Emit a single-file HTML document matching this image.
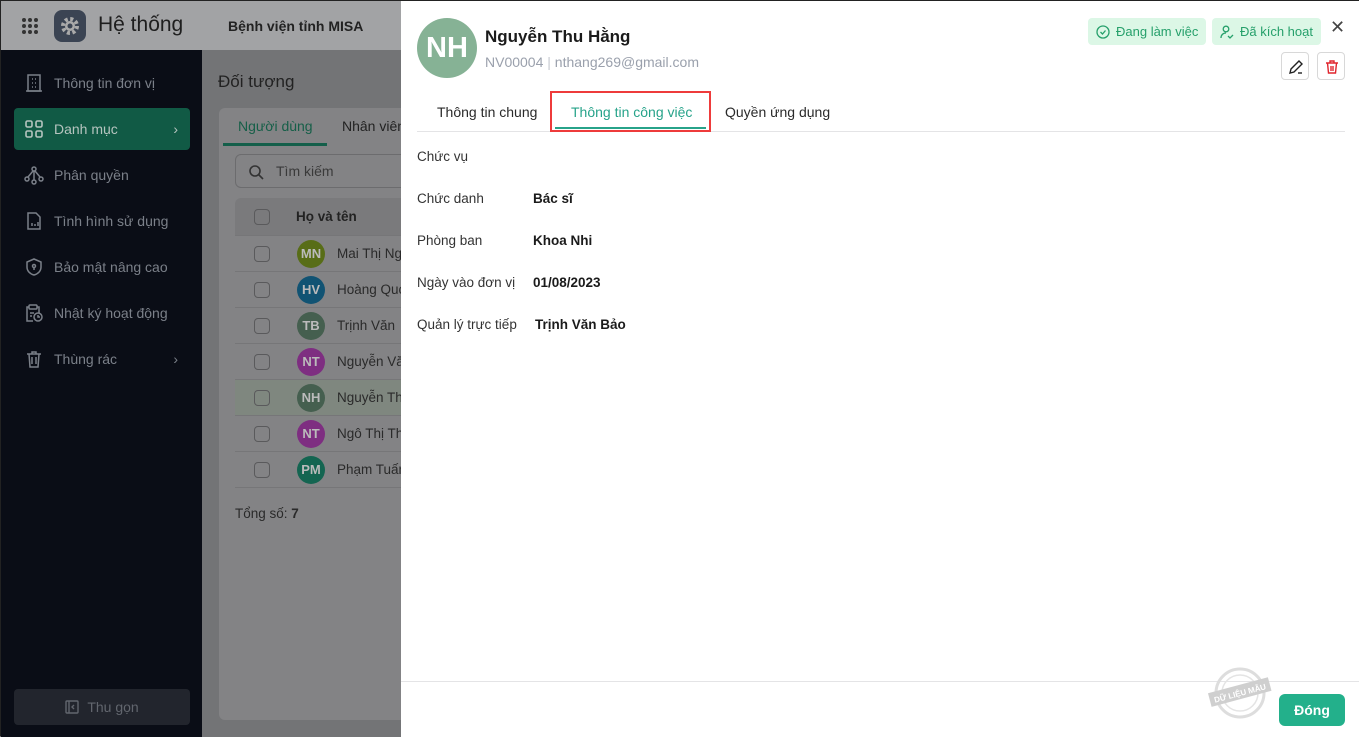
<!DOCTYPE html>
<html><head><meta charset="utf-8"><style>
*{box-sizing:border-box;margin:0;padding:0}
body{width:1359px;height:736px;overflow:hidden;font-family:"Liberation Sans","Noto Sans CJK SC",sans-serif;position:relative;background:#737476;border:1px solid #222}
.hdr{position:absolute;left:0;top:0;width:400px;height:49px;background:#a2a3a5}
.side{position:absolute;left:0;top:49px;width:201px;height:687px;background:#0a0d16}
.side .it{position:absolute;left:13px;width:176px;height:42px;display:flex;align-items:center;color:#7b8089;font-size:14px}
.side .it svg{margin:0 10px 0 10px}
.main{position:absolute;left:201px;top:49px;width:199px;height:687px;background:#737476}
.card{position:absolute;left:17px;top:58px;width:200px;height:612px;background:#838385;border-radius:6px}
.row{position:absolute;left:16px;width:200px;height:36px;border-bottom:1px solid #767678;display:flex;align-items:center}
.cb{width:16px;height:16px;border:1.5px solid #5a5a5c;border-radius:4px;margin-left:19px}
.av{width:28px;height:28px;border-radius:50%;color:#bbb;font-weight:bold;font-size:13px;display:flex;align-items:center;justify-content:center;margin-left:27px}
.nm{margin-left:12px;font-size:13.5px;color:#2a2a2a;white-space:nowrap}
.panel{position:absolute;left:400px;top:0;width:959px;height:736px;background:#fff}
.lbl{position:absolute;left:16px;font-size:13.5px;color:#333}
.val{position:absolute;font-size:13.5px;color:#1b1b1b;font-weight:bold}
.badge{position:absolute;top:17px;height:27px;background:#dcf7e6;border-radius:4px;color:#26a06b;font-size:13px;display:flex;align-items:center;padding:0 8px}
</style></head><body>
<div class="hdr">
 <svg style="position:absolute;left:20px;top:16px" width="18" height="18"><g fill="#333">
 <circle cx="3" cy="3" r="2"/><circle cx="9" cy="3" r="2"/><circle cx="15" cy="3" r="2"/><circle cx="3" cy="9" r="2"/><circle cx="9" cy="9" r="2"/><circle cx="15" cy="9" r="2"/><circle cx="3" cy="15" r="2"/><circle cx="9" cy="15" r="2"/><circle cx="15" cy="15" r="2"/></g></svg>
 <div style="position:absolute;left:53px;top:9px;width:32px;height:32px;border-radius:8px;background:#3b4453;display:flex;align-items:center;justify-content:center">
  <svg width="20" height="20" viewBox="0 0 20 20"><circle cx="10" cy="10" r="7" fill="none" stroke="#aaa" stroke-width="4" stroke-dasharray="3 2.5"/><circle cx="10" cy="10" r="5" fill="#aaa"/><circle cx="10" cy="10" r="2.5" fill="#3b4453"/></svg></div>
 <div style="position:absolute;left:97px;top:12px;font-size:21px;color:#1e1e1e">Hệ thống</div>
 <div style="position:absolute;left:227px;top:17px;font-size:14px;font-weight:bold;color:#222">Bệnh viện tỉnh MISA</div>
</div>
<div class="side">
 <div class="it" style="top:12px"><svg width="20" height="20" fill="none" stroke="#7b8089" stroke-width="1.5"><rect x="4" y="2" width="12" height="16"/><path d="M2 18h16M8 6h1M11 6h1M8 10h1M11 10h1M8 14h1M11 14h1"/></svg>Thông tin đơn vị</div>
 <div class="it" style="top:58px;background:#115a45;border-radius:4px;color:#b6c4bf"><svg width="20" height="20" fill="none" stroke="#b6c4bf" stroke-width="1.6"><rect x="2" y="2" width="6" height="6" rx="1.5"/><rect x="12" y="2" width="6" height="6" rx="1.5"/><rect x="2" y="12" width="6" height="6" rx="1.5"/><rect x="12" y="12" width="6" height="6" rx="1.5"/></svg>Danh mục<span style="margin-left:auto;margin-right:12px">›</span></div>
 <div class="it" style="top:104px"><svg width="20" height="20" fill="none" stroke="#7b8089" stroke-width="1.5"><circle cx="10" cy="4" r="2"/><circle cx="3" cy="14" r="2"/><circle cx="17" cy="14" r="2"/><circle cx="10" cy="17" r="2"/><path d="M10 6v9M9 6l-5 6M11 6l5 6"/></svg>Phân quyền</div>
 <div class="it" style="top:150px"><svg width="20" height="20" fill="none" stroke="#7b8089" stroke-width="1.5"><path d="M4 2h8l4 4v12H4z"/><path d="M8 15v-3M11 15v-2M14 15v-4"/></svg>Tình hình sử dụng</div>
 <div class="it" style="top:196px"><svg width="20" height="20" fill="none" stroke="#7b8089" stroke-width="1.5"><path d="M10 2l7 3v5c0 4-3 7-7 8-4-1-7-4-7-8V5z"/><circle cx="10" cy="9" r="1.5"/><path d="M10 10v3"/></svg>Bảo mật nâng cao</div>
 <div class="it" style="top:242px"><svg width="20" height="20" fill="none" stroke="#7b8089" stroke-width="1.5"><path d="M13 4h2v6M9 18H3V4h2"/><rect x="5" y="2" width="8" height="4" rx="1"/><circle cx="14" cy="14" r="4"/><path d="M6 10h4M6 13h2M14 12v2h2"/></svg>Nhật ký hoạt động</div>
 <div class="it" style="top:288px"><svg width="20" height="20" fill="none" stroke="#7b8089" stroke-width="1.5"><path d="M3 5h14M8 5V3h4v2M5 5l1 13h8l1-13M8 8v7M12 8v7"/></svg>Thùng rác<span style="margin-left:auto;margin-right:12px">›</span></div>
 <div style="position:absolute;left:13px;top:639px;width:176px;height:36px;background:#22252d;border-radius:4px;color:#62666e;font-size:14px;display:flex;align-items:center;justify-content:center"><svg width="14" height="14" style="margin-right:8px" fill="none" stroke="#62666e" stroke-width="1.4"><rect x="1" y="1" width="12" height="12" rx="1"/><path d="M4 1v12M9 5l-2 2 2 2"/></svg>Thu gọn</div>
</div>
<div class="main">
 <div style="position:absolute;left:16px;top:22px;font-size:17px;color:#222">Đối tượng</div>
 <div class="card">
  <div style="position:absolute;left:19px;top:10px;font-size:14px;color:#165f48">Người dùng</div>
  <div style="position:absolute;left:4px;top:35px;width:104px;height:3px;background:#145f4a"></div>
  <div style="position:absolute;left:123px;top:10px;font-size:14px;color:#222;white-space:nowrap">Nhân viên</div>
  <div style="position:absolute;left:16px;top:46px;width:200px;height:34px;border:1px solid #6c6c6e;border-radius:6px"><svg style="position:absolute;left:12px;top:9px" width="16" height="16" fill="none" stroke="#333" stroke-width="1.6"><circle cx="7" cy="7" r="5"/><path d="M11 11l4 4"/></svg><span style="position:absolute;left:40px;top:8px;font-size:14px;color:#3a3a3a">Tìm kiếm</span></div>
  <div class="row" style="top:90px;height:38px;background:#7a7a7c;border-radius:6px 0 0 0"><div class="cb"></div><span style="margin-left:26px;font-weight:bold;font-size:13.5px;color:#222">Họ và tên</span></div>
  <div class="row" style="top:128px"><div class="cb"></div><div class="av" style="background:#586d17">MN</div><span class="nm">Mai Thị Ng</span></div>
  <div class="row" style="top:164px"><div class="cb"></div><div class="av" style="background:#115373">HV</div><span class="nm">Hoàng Quo</span></div>
  <div class="row" style="top:200px"><div class="cb"></div><div class="av" style="background:#455f4f">TB</div><span class="nm">Trịnh Văn</span></div>
  <div class="row" style="top:236px"><div class="cb"></div><div class="av" style="background:#7e2e81">NT</div><span class="nm">Nguyễn Vă</span></div>
  <div class="row" style="top:272px;background:#7f877f"><div class="cb"></div><div class="av" style="background:#455f4f">NH</div><span class="nm">Nguyễn Th</span></div>
  <div class="row" style="top:308px"><div class="cb"></div><div class="av" style="background:#7e2e81">NT</div><span class="nm">Ngô Thị Th</span></div>
  <div class="row" style="top:344px"><div class="cb"></div><div class="av" style="background:#146551">PM</div><span class="nm">Phạm Tuấn</span></div>
  <div style="position:absolute;left:16px;top:398px;font-size:13.5px;color:#2a2a2a">Tổng số: <b>7</b></div>
 </div>
</div>
<div class="panel">
 <div style="position:absolute;left:16px;top:17px;width:60px;height:60px;border-radius:50%;background:#86b295;color:#fff;font-weight:bold;font-size:29px;display:flex;align-items:center;justify-content:center">NH</div>
 <div style="position:absolute;left:84px;top:26px;font-size:17px;color:#1b1b1b;font-weight:bold">Nguyễn Thu Hằng</div>
 <div style="position:absolute;left:84px;top:53px;font-size:14px;color:#9aa0ac">NV00004 <span style="color:#c5c9d0">|</span> nthang269@gmail.com</div>
 <div class="badge" style="left:687px"><svg width="14" height="14" style="margin-right:6px" fill="none" stroke="#26a06b" stroke-width="1.3"><circle cx="7" cy="7" r="6"/><path d="M4.5 7l2 2 3-3.5"/></svg>Đang làm việc</div>
 <div class="badge" style="left:811px"><svg width="14" height="14" style="margin-right:6px" fill="none" stroke="#26a06b" stroke-width="1.3"><circle cx="6" cy="4" r="2.8"/><path d="M1 13c0-3 2-5 5-5M8 11l2 2 3-3"/></svg>Đã kích hoạt</div>
 <div style="position:absolute;left:929px;top:16px;font-size:18px;color:#444">✕</div>
 <div style="position:absolute;left:880px;top:51px;width:28px;height:28px;border:1px solid #d8d8d8;border-radius:4px"><svg style="position:absolute;left:6px;top:6px" width="16" height="16" fill="none" stroke="#222" stroke-width="1.4"><path d="M2 14l1-4 8-8 3 3-8 8z"/><path d="M10 14h4"/></svg></div>
 <div style="position:absolute;left:916px;top:51px;width:28px;height:28px;border:1px solid #d8d8d8;border-radius:4px"><svg style="position:absolute;left:6px;top:6px" width="16" height="16" fill="none" stroke="#e0262e" stroke-width="1.4"><path d="M2 4h12M6 4V2h4v2M3.5 4l1 10h7l1-10M7 7v5M9 7v5"/></svg></div>
 <div style="position:absolute;left:16px;top:130px;width:928px;height:1px;background:#e4e4e6"></div>
 <div style="position:absolute;left:36px;top:103px;font-size:14px;color:#2a2a2a">Thông tin chung</div>
 <div style="position:absolute;left:170px;top:103px;font-size:14px;color:#27a38a">Thông tin công việc</div>
 <div style="position:absolute;left:324px;top:103px;font-size:14px;color:#2a2a2a">Quyền ứng dụng</div>
 <div style="position:absolute;left:149px;top:90px;width:161px;height:41px;border:2px solid #ee3b3b"></div>
 <div style="position:absolute;left:154px;top:126px;width:151px;height:2px;background:#27a38a"></div>
 <div class="lbl" style="top:148px">Chức vụ</div>
 <div class="lbl" style="top:190px">Chức danh</div><div class="val" style="left:132px;top:190px">Bác sĩ</div>
 <div class="lbl" style="top:232px">Phòng ban</div><div class="val" style="left:132px;top:232px">Khoa Nhi</div>
 <div class="lbl" style="top:274px">Ngày vào đơn vị</div><div class="val" style="left:132px;top:274px">01/08/2023</div>
 <div class="lbl" style="top:316px">Quản lý trực tiếp</div><div class="val" style="left:134px;top:316px">Trịnh Văn Bảo</div>
 <div style="position:absolute;left:0;top:680px;width:959px;height:1px;background:#e4e4e6"></div>
 <svg style="position:absolute;left:804px;top:662px" width="70" height="60"><circle cx="35" cy="30" r="24" fill="none" stroke="#ddd" stroke-width="3"/><circle cx="35" cy="30" r="18" fill="none" stroke="#e4e4e4" stroke-width="1.5"/><g transform="rotate(-15 35 30)"><rect x="4" y="22" width="62" height="14" fill="#cfcfcf"/><text x="35" y="33" font-size="8" font-weight="bold" fill="#fff" text-anchor="middle" font-family="Liberation Sans">DỮ LIỆU MẪU</text></g></svg>
 <div style="position:absolute;left:878px;top:693px;width:66px;height:32px;background:#23b08b;border-radius:6px;color:#fff;font-weight:bold;font-size:14px;display:flex;align-items:center;justify-content:center">Đóng</div>
</div>
</body></html>
